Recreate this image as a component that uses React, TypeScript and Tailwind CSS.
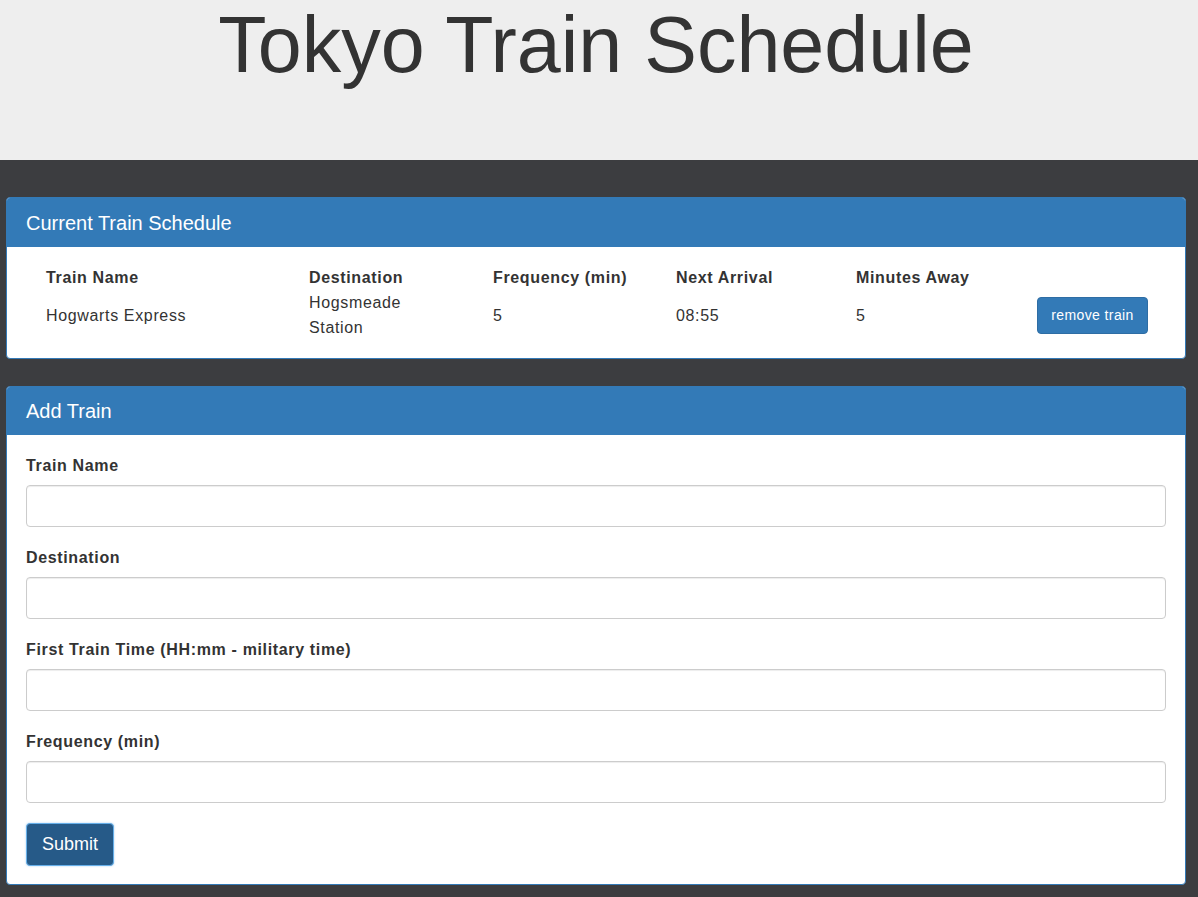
import React from "react";

type Train = {
  name: string;
  destination: string;
  frequency: number;
  next: string;
  away: number;
};

const trains: Train[] = [
  { name: "Hogwarts Express", destination: "Hogsmeade Station", frequency: 5, next: "08:55", away: 5 },
];

const fields = ["Train Name", "Destination", "First Train Time (HH:mm - military time)", "Frequency (min)"];

const Panel = ({ title, tall, children }: { title: string; tall?: boolean; children: React.ReactNode }) => (
  <div className="w-[1180px] ml-[6px] rounded-[4px] border border-[#337ab7] bg-white overflow-hidden">
    <div
      className={
        (tall ? "h-[49px]" : "h-[48px]") +
        " bg-[#337ab7] px-[19px] flex items-center text-[20px] tracking-normal text-white"
      }
    >
      {title}
    </div>
    {children}
  </div>
);

export default function App() {
  return (
    <div className="min-h-[897px] bg-[#3c3d40] text-[#333] text-[16px] tracking-[0.65px] font-['Liberation_Sans',Arial,sans-serif]">
      <div className="h-[160px] bg-[#eeeeee] pt-[5px] pr-[6px] text-center">
        <h1 className="text-[79px] leading-none font-normal tracking-normal text-[#333]">Tokyo Train Schedule</h1>
      </div>

      <div className="pt-[37px] pb-[12px]">
        <Panel title="Current Train Schedule" tall>
          <div className="pt-[19px] pb-[18px] pl-[39px]">
            <div className="grid grid-cols-[263px_184px_183px_180px_181px_1fr] h-6 leading-6 font-bold">
              <div>Train Name</div>
              <div>Destination</div>
              <div>Frequency (min)</div>
              <div>Next Arrival</div>
              <div>Minutes Away</div>
              <div></div>
            </div>
            {trains.map((t, i) => (
              <div key={i} className="grid grid-cols-[263px_184px_183px_180px_181px_1fr] items-center leading-[25px]">
                <div>{t.name}</div>
                <div className="w-[100px]">{t.destination}</div>
                <div>{t.frequency}</div>
                <div>{t.next}</div>
                <div>{t.away}</div>
                <div>
                  <button className="h-[37px] w-[111px] rounded-[4px] border border-[#2e6da4] bg-[#337ab7] text-[14px] tracking-[0.4px] text-white">
                    remove train
                  </button>
                </div>
              </div>
            ))}
          </div>
        </Panel>

        <div className="h-[27px]" />

        <Panel title="Add Train">
          <div className="px-[19px] pt-[20px] pb-[18px]">
            {fields.map((f) => (
              <div key={f} className="mb-[20px]">
                <label className="block font-bold leading-[22px] mb-2">{f}</label>
                <input
                  type="text"
                  className="block w-full h-[42px] rounded-[4px] border border-[#cccccc] bg-white px-3 shadow-[inset_0_1px_1px_rgba(0,0,0,0.075)] outline-none"
                />
              </div>
            ))}
            <button className="h-[43px] w-[88px] rounded-[4px] border border-[#66afe9] bg-[#265a88] text-[18px] tracking-normal text-white shadow-[0_0_2px_rgba(102,175,233,0.6)]">
              Submit
            </button>
          </div>
        </Panel>
      </div>
    </div>
  );
}
